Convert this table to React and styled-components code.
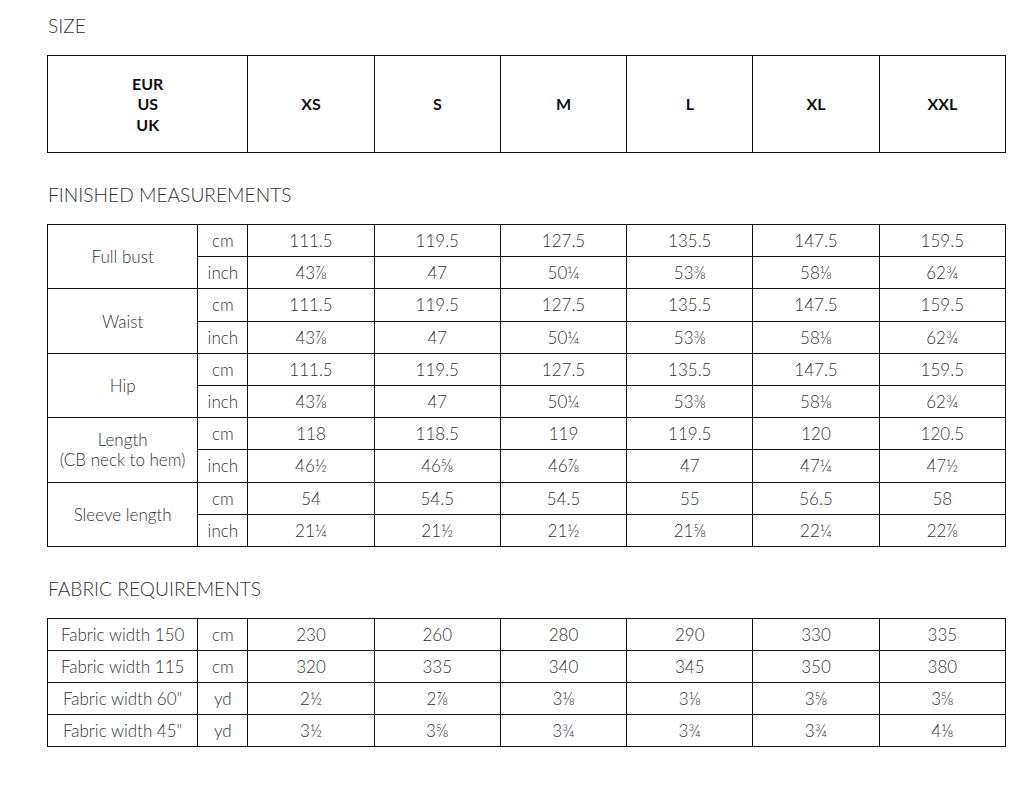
import React from "react";
import styled, { createGlobalStyle } from "styled-components";

const GlobalStyle = createGlobalStyle`
  body {
    margin: 0;
    background: #fff;
    font-family: Lato, "Open Sans", sans-serif;
    color: #333;
  }
`;

const Page = styled.div`
  padding: 14px 25px 40px 47px;
  width: 959px;
`;

const SectionTitle = styled.h2`
  margin: ${(props) => (props.first ? "0" : "30px")} 0 17px 1px;
  font-size: 19.2px;
  line-height: 24px;
  font-weight: 300;
  color: #333;
  letter-spacing: 0;
`;

const Table = styled.table`
  width: 959px;
  border-collapse: collapse;
  table-layout: fixed;
`;

const Row = styled.tr`
  height: ${(props) => props.h || 32}px;
`;

const Cell = styled.td`
  border: 1px solid #111;
  padding: 1px 0 0;
  text-align: center;
  vertical-align: middle;
  font-size: 17px;
  font-weight: 300;
  line-height: 20px;
  color: #333;
`;

const HeadCell = styled(Cell)`
  font-size: 16px;
  font-weight: 700;
  color: #111;
  line-height: 20.5px;
`;

const sizes = ["XS", "S", "M", "L", "XL", "XXL"];

const measurements = [
  {
    label: ["Full bust"],
    cm: ["111.5", "119.5", "127.5", "135.5", "147.5", "159.5"],
    inch: ["43⅞", "47", "50¼", "53⅜", "58⅛", "62¾"],
  },
  {
    label: ["Waist"],
    cm: ["111.5", "119.5", "127.5", "135.5", "147.5", "159.5"],
    inch: ["43⅞", "47", "50¼", "53⅜", "58⅛", "62¾"],
  },
  {
    label: ["Hip"],
    cm: ["111.5", "119.5", "127.5", "135.5", "147.5", "159.5"],
    inch: ["43⅞", "47", "50¼", "53⅜", "58⅛", "62¾"],
  },
  {
    label: ["Length", "(CB neck to hem)"],
    cm: ["118", "118.5", "119", "119.5", "120", "120.5"],
    inch: ["46½", "46⅝", "46⅞", "47", "47¼", "47½"],
  },
  {
    label: ["Sleeve length"],
    cm: ["54", "54.5", "54.5", "55", "56.5", "58"],
    inch: ["21¼", "21½", "21½", "21⅝", "22¼", "22⅞"],
  },
];

const fabric = [
  { label: "Fabric width 150", unit: "cm", values: ["230", "260", "280", "290", "330", "335"] },
  { label: "Fabric width 115", unit: "cm", values: ["320", "335", "340", "345", "350", "380"] },
  { label: "Fabric width 60\"", unit: "yd", values: ["2½", "2⅞", "3⅛", "3⅛", "3⅝", "3⅝"] },
  { label: "Fabric width 45\"", unit: "yd", values: ["3½", "3⅝", "3¾", "3¾", "3¾", "4⅛"] },
];

const SplitCols = () => (
  <colgroup>
    <col style={{ width: 150 }} />
    <col style={{ width: 50 }} />
    {sizes.map((s) => (
      <col key={s} style={{ width: 126 }} />
    ))}
  </colgroup>
);

const App = () => (
  <Page>
    <GlobalStyle />
    <SectionTitle first>SIZE</SectionTitle>
    <Table>
      <colgroup>
        <col style={{ width: 200 }} />
        {sizes.map((s) => (
          <col key={s} style={{ width: 126 }} />
        ))}
      </colgroup>
      <tbody>
        <Row h={97}>
          <HeadCell>
            EUR
            <br />
            US
            <br />
            UK
          </HeadCell>
          {sizes.map((s) => (
            <HeadCell key={s}>{s}</HeadCell>
          ))}
        </Row>
      </tbody>
    </Table>

    <SectionTitle>FINISHED MEASUREMENTS</SectionTitle>
    <Table>
      <SplitCols />
      <tbody>
        {measurements.map((m) => (
          <React.Fragment key={m.label[0]}>
            <Row h={32.2}>
              <Cell rowSpan={2}>
                {m.label.map((l, i) => (
                  <div key={i}>{l}</div>
                ))}
              </Cell>
              <Cell>cm</Cell>
              {m.cm.map((v, i) => (
                <Cell key={i}>{v}</Cell>
              ))}
            </Row>
            <Row h={32.2}>
              <Cell>inch</Cell>
              {m.inch.map((v, i) => (
                <Cell key={i}>{v}</Cell>
              ))}
            </Row>
          </React.Fragment>
        ))}
      </tbody>
    </Table>

    <SectionTitle>FABRIC REQUIREMENTS</SectionTitle>
    <Table>
      <SplitCols />
      <tbody>
        {fabric.map((f) => (
          <Row key={f.label}>
            <Cell>{f.label}</Cell>
            <Cell>{f.unit}</Cell>
            {f.values.map((v, i) => (
              <Cell key={i}>{v}</Cell>
            ))}
          </Row>
        ))}
      </tbody>
    </Table>
  </Page>
);

export default App;
